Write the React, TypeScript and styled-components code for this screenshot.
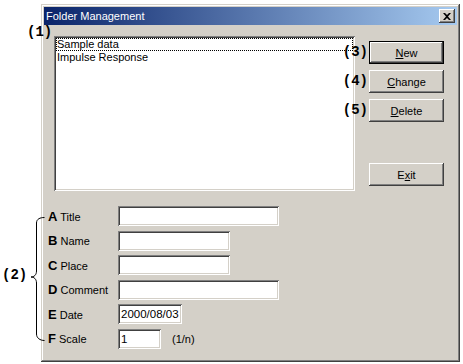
import styled, { createGlobalStyle, css } from 'styled-components';

const GlobalStyle = createGlobalStyle`
  html, body {
    margin: 0;
    background: #fff;
  }
  body {
    font-family: "Liberation Sans", Arial, sans-serif;
    font-size: 11px;
    color: #000;
  }
`;

const raised = css`
    box-shadow: inset -1px -1px #404040, inset 1px 1px #fff, inset -2px -2px #808080, inset 2px 2px #d4d0c8;
`;
const sunken = css`
    box-shadow: inset 1px 1px #808080, inset -1px -1px #fff, inset 2px 2px #404040, inset -2px -2px #d4d0c8;
`;

const fields = [
    { key: 'A', label: 'Title', width: 161 },
    { key: 'B', label: 'Name', width: 112 },
    { key: 'C', label: 'Place', width: 112 },
    { key: 'D', label: 'Comment', width: 161 },
    { key: 'E', label: 'Date', width: 64, value: '2000/08/03' },
    { key: 'F', label: 'Scale', width: 43, value: '1', unit: '(1/n)' },
];

const buttons = [
    { tag: '(3)', acc: 'N', rest: 'ew', primary: true },
    { tag: '(4)', acc: 'C', rest: 'hange' },
    { tag: '(5)', acc: 'D', rest: 'elete' },
];

export default function App() {
    return (
        <>
            <GlobalStyle />
            <Stage>
                <Dialog>
                    <TitleBar>
                        <span>Folder Management</span>
                        <CloseButton>
                            <svg width="8" height="7" viewBox="0 0 8 7">
                                <path d="M0 0h2l2 2 2-2h2L5 3.5 8 7H6L4 5 2 7H0l3-3.5z" fill="#000" />
                            </svg>
                        </CloseButton>
                    </TitleBar>
                    <Body>
                        <TopRow>
                            <ListBox>
                                <ListTag>(1)</ListTag>
                                <ListItem focused>Sample data</ListItem>
                                <ListItem>Impulse Response</ListItem>
                            </ListBox>
                            <ButtonColumn>
                                {buttons.map((b) => (
                                    <ButtonSlot key={b.tag}>
                                        <SideTag>{b.tag}</SideTag>
                                        <PushButton primary={b.primary}>
                                            <u>{b.acc}</u>
                                            {b.rest}
                                        </PushButton>
                                    </ButtonSlot>
                                ))}
                                <ExitSlot>
                                    <PushButton>
                                        E<u>x</u>it
                                    </PushButton>
                                </ExitSlot>
                            </ButtonColumn>
                        </TopRow>
                        <Form>
                            <FormTag>(2)</FormTag>
                            <Brace width="20" height="130" viewBox="0 0 20 130">
                                <path
                                    d="M16.5 3.5 C12 3.5 8.5 5 8.5 9 L8.5 57 C8.5 61 6 63 3 63 C6 63 8.5 65 8.5 69 L8.5 120 C8.5 124 12 126.5 16.5 126.5"
                                    fill="none"
                                    stroke="#000"
                                    strokeWidth="1"
                                />
                            </Brace>
                            {fields.map((f) => (
                                <FormRow key={f.key}>
                                    <FieldLabel>
                                        <KeyLetter>{f.key}</KeyLetter> {f.label}
                                    </FieldLabel>
                                    <Field width={f.width}>{f.value}</Field>
                                    {f.unit && <Unit>{f.unit}</Unit>}
                                </FormRow>
                            ))}
                        </Form>
                    </Body>
                </Dialog>
            </Stage>
        </>
    );
}

const Stage = styled.div`
    position: relative;
    width: 463px;
    height: 364px;
    padding: 4px 0 0 41px;
    box-sizing: border-box;
`;
const Dialog = styled.div`
    width: 419px;
    height: 358px;
    box-sizing: border-box;
    padding: 3px;
    background: #d4d0c8;
    display: flex;
    flex-direction: column;
    box-shadow: inset -1px -1px #404040, inset 1px 1px #d4d0c8, inset -2px -2px #808080, inset 2px 2px #fff;
`;
const TitleBar = styled.div`
    height: 18px;
    display: flex;
    align-items: center;
    justify-content: space-between;
    padding: 0 2px 0 2px;
    background: linear-gradient(to right, #0a246a, #a6caf0);
    color: #fff;
    font-size: 11px;
`;
const CloseButton = styled.div`
    width: 16px;
    height: 14px;
    display: flex;
    align-items: center;
    justify-content: center;
    background: #d4d0c8;
    ${raised};
`;
const Body = styled.div`
    padding: 11px 0 0 4px;
`;
const TopRow = styled.div`
    display: flex;
    align-items: flex-start;
    padding-left: 6px;
`;
const ListBox = styled.div`
    position: relative;
    width: 301px;
    height: 155px;
    box-sizing: border-box;
    padding: 2px;
    background: #fff;
    ${sunken};
`;
const ListItem = styled.div<{ focused?: boolean }>`
    height: 13px;
    line-height: 13px;
    padding-left: 1px;
    box-sizing: border-box;
    outline: ${({ focused }) => (focused ? '1px dotted #000' : 'none')};
    outline-offset: -1px;
`;
const Callout = styled.span`
    position: absolute;
    font-family: "Liberation Mono", "Courier New", monospace;
    font-weight: bold;
    font-size: 14px;
    line-height: 16px;
    color: #000;
    white-space: nowrap;
`;
const ListTag = styled(Callout)`
    left: -27px;
    top: -12px;
`;
const FormTag = styled(Callout)`
    left: -46px;
    top: 61px;
`;
const ButtonColumn = styled.div`
    display: flex;
    flex-direction: column;
    gap: 6px;
    margin-left: 14px;
    padding-top: 5px;
`;
const ButtonSlot = styled.div`
    position: relative;
    display: flex;
    align-items: center;
`;
const SideTag = styled(Callout)`
    right: calc(100% + 1px);
    top: 3px;
`;
const ExitSlot = styled(ButtonSlot)`
    margin-top: 35px;
`;
const PushButton = styled.div<{ primary?: boolean }>`
    width: 75px;
    height: 23px;
    box-sizing: border-box;
    display: flex;
    align-items: center;
    justify-content: center;
    background: #d4d0c8;
    font-size: 11px;
    ${({ primary }) =>
        primary
            ? css`
                  box-shadow: inset 0 0 0 1px #000, inset -2px -2px #404040, inset 2px 2px #fff,
                      inset -3px -3px #808080;
              `
            : raised};
`;
const Form = styled.div`
    position: relative;
    margin-top: 15px;
    display: flex;
    flex-direction: column;
    gap: 4.5px;
`;
const Brace = styled.svg`
    position: absolute;
    left: -20px;
    top: 8px;
`;
const FormRow = styled.div`
    display: flex;
    align-items: center;
    height: 20px;
`;
const FieldLabel = styled.div`
    width: 70px;
    white-space: nowrap;
    font-size: 11px;
`;
const KeyLetter = styled.b`
    font-size: 13px;
`;
const Field = styled.div<{ width: number }>`
    width: ${({ width }) => width}px;
    height: 20px;
    box-sizing: border-box;
    padding: 0 2px 0 3px;
    display: flex;
    align-items: center;
    background: #fff;
    font-size: 11.5px;
    ${sunken};
`;
const Unit = styled.span`
    margin-left: 11px;
    font-size: 11px;
`;
